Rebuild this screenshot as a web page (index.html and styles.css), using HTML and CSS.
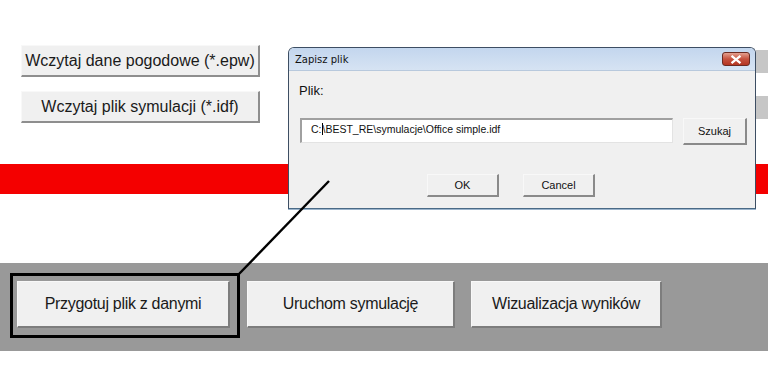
FILE: index.html
```html
<!DOCTYPE html>
<html>
<head>
<meta charset="utf-8">
<link rel="stylesheet" href="styles.css">
</head>
<body>
<div class="page">
  <div class="top">
    <div class="row row1">
      <button class="btn btn-top">Wczytaj dane pogodowe (*.epw)</button>
      <div class="stub"></div>
    </div>
    <div class="row row2">
      <button class="btn btn-top">Wczytaj plik symulacji (*.idf)</button>
      <div class="stub"></div>
    </div>
  </div>
  <div class="redbar"></div>
  <div class="band">
    <button class="btn btn-big b1">Przygotuj plik z danymi</button>
    <button class="btn btn-big b2">Uruchom symulację</button>
    <button class="btn btn-big b3">Wizualizacja wyników</button>
  </div>

  <div class="highlight"></div>

  <div class="dialog">
    <div class="titlebar">
      <span class="title">Zapisz plik</span>
      <span class="close"><svg width="12" height="9" viewBox="0 0 12 9"><path d="M1.5 0.8 L10.5 8.2 M10.5 0.8 L1.5 8.2" stroke="#fff" stroke-width="2.2"/></svg></span>
    </div>
    <div class="dbody">
      <div class="label">Plik:</div>
      <div class="inputrow">
        <div class="input">C:<span class="caret"></span>\BEST_RE\symulacje\Office simple.idf</div>
        <button class="btn btn-small szukaj">Szukaj</button>
      </div>
      <div class="actions">
        <button class="btn btn-small act">OK</button>
        <button class="btn btn-small act">Cancel</button>
      </div>
    </div>
  </div>

  <svg class="connector" width="768" height="371" viewBox="0 0 768 371">
    <line x1="329" y1="181" x2="239" y2="274" stroke="#000" stroke-width="2.4"/>
  </svg>
</div>
</body>
</html>
```
FILE: styles.css
```css
html, body {
  margin: 0;
  padding: 0;
  background: #fff;
  width: 768px;
  height: 371px;
  overflow: hidden;
}
.page {
  position: relative;
  width: 768px;
  height: 371px;
  font-family: "Liberation Sans", Arial, sans-serif;
}
.top {
  padding-top: 45px;
  display: flex;
  flex-direction: column;
  gap: 14px;
}
.row {
  display: flex;
  align-items: center;
  padding-left: 21px;
  height: 32px;
}
.stub {
  margin-left: auto;
  width: 12px;
  height: 23px;
  background: #c6c6c6;
}
.btn {
  font-family: "Liberation Sans", Arial, sans-serif;
  background: #f0f0f0;
  color: #1a1a1a;
  border: none;
  border-top: 1px solid #f8f8f8;
  border-left: 1px solid #f8f8f8;
  border-right: 2px solid #8e8e8e;
  border-bottom: 2px solid #8e8e8e;
  padding: 0;
  margin: 0;
  box-sizing: border-box;
}
.btn-top {
  width: 239px;
  height: 32px;
  font-size: 16px;
}
.redbar {
  margin-top: 41px;
  height: 30px;
  background: #f40000;
}
.band {
  margin-top: 69px;
  height: 88px;
  background: #999999;
  display: flex;
  align-items: flex-start;
  padding-top: 18px;
  padding-left: 17px;
  box-sizing: border-box;
  gap: 17px;
}
.btn-big {
  height: 47px;
  font-size: 16px;
  letter-spacing: -0.3px;
  border-right: 2px solid #7d7d7d;
  border-bottom: 2px solid #7d7d7d;
}
.b1 { width: 213px; }
.b2 { width: 208px; }
.b3 { width: 191px; margin-left: -1px; }

.highlight {
  position: absolute;
  left: 10px;
  top: 273px;
  width: 230px;
  height: 65px;
  border: 3px solid #000;
  box-sizing: border-box;
}
.connector {
  position: absolute;
  left: 0;
  top: 0;
  pointer-events: none;
}

.dialog {
  position: absolute;
  left: 288px;
  top: 47px;
  width: 468px;
  height: 162px;
  box-sizing: border-box;
  border: 1px solid #3d4e63;
  border-bottom-color: #4a6a86;
  border-radius: 6px 6px 0 0;
  background: #f0f0f0;
  overflow: hidden;
  box-shadow: 0 1px 0 #9bb4cc;
}
.titlebar {
  height: 22px;
  background: linear-gradient(#c3d6ee, #d6e3f3);
  display: flex;
  align-items: center;
  padding-left: 6px;
  padding-right: 5px;
  border-bottom: 1px solid #b8c9dd;
}
.title {
  font-family: "DejaVu Sans", sans-serif;
  font-size: 10px;
  color: #111;
}
.close {
  margin-left: auto;
  width: 28px;
  height: 14px;
  box-sizing: border-box;
  border: 1px solid #6b2a22;
  border-radius: 3px;
  background: linear-gradient(#e4a090, #c6523f 50%, #b43522);
  display: flex;
  align-items: center;
  justify-content: center;
}
.dbody {
  padding: 12px 0 0 10px;
}
.label {
  font-size: 13px;
  color: #111;
  height: 16px;
  line-height: 16px;
}
.inputrow {
  margin-top: 19px;
  display: flex;
  align-items: flex-start;
}
.input {
  width: 373px;
  height: 25px;
  box-sizing: border-box;
  background: #fff;
  border-top: 2px solid #a0a0a0;
  border-left: 2px solid #a0a0a0;
  border-right: 1px solid #e3e3e3;
  border-bottom: 1px solid #e3e3e3;
  font-size: 10.5px;
  line-height: 19px;
  padding-left: 9px;
  color: #111;
  margin-left: 1px;
}
.caret {
  display: inline-block;
  width: 1px;
  height: 12px;
  background: #000;
  vertical-align: -2px;
}
.btn-small {
  font-size: 11px;
  color: #111;
  border-right: 2px solid #8a8a8a;
  border-bottom: 2px solid #8a8a8a;
}
.szukaj {
  width: 64px;
  height: 27px;
  margin-left: 10px;
}
.actions {
  margin-top: 29px;
  display: flex;
  padding-left: 128px;
  gap: 24px;
}
.act {
  width: 72px;
  height: 23px;
}
```
